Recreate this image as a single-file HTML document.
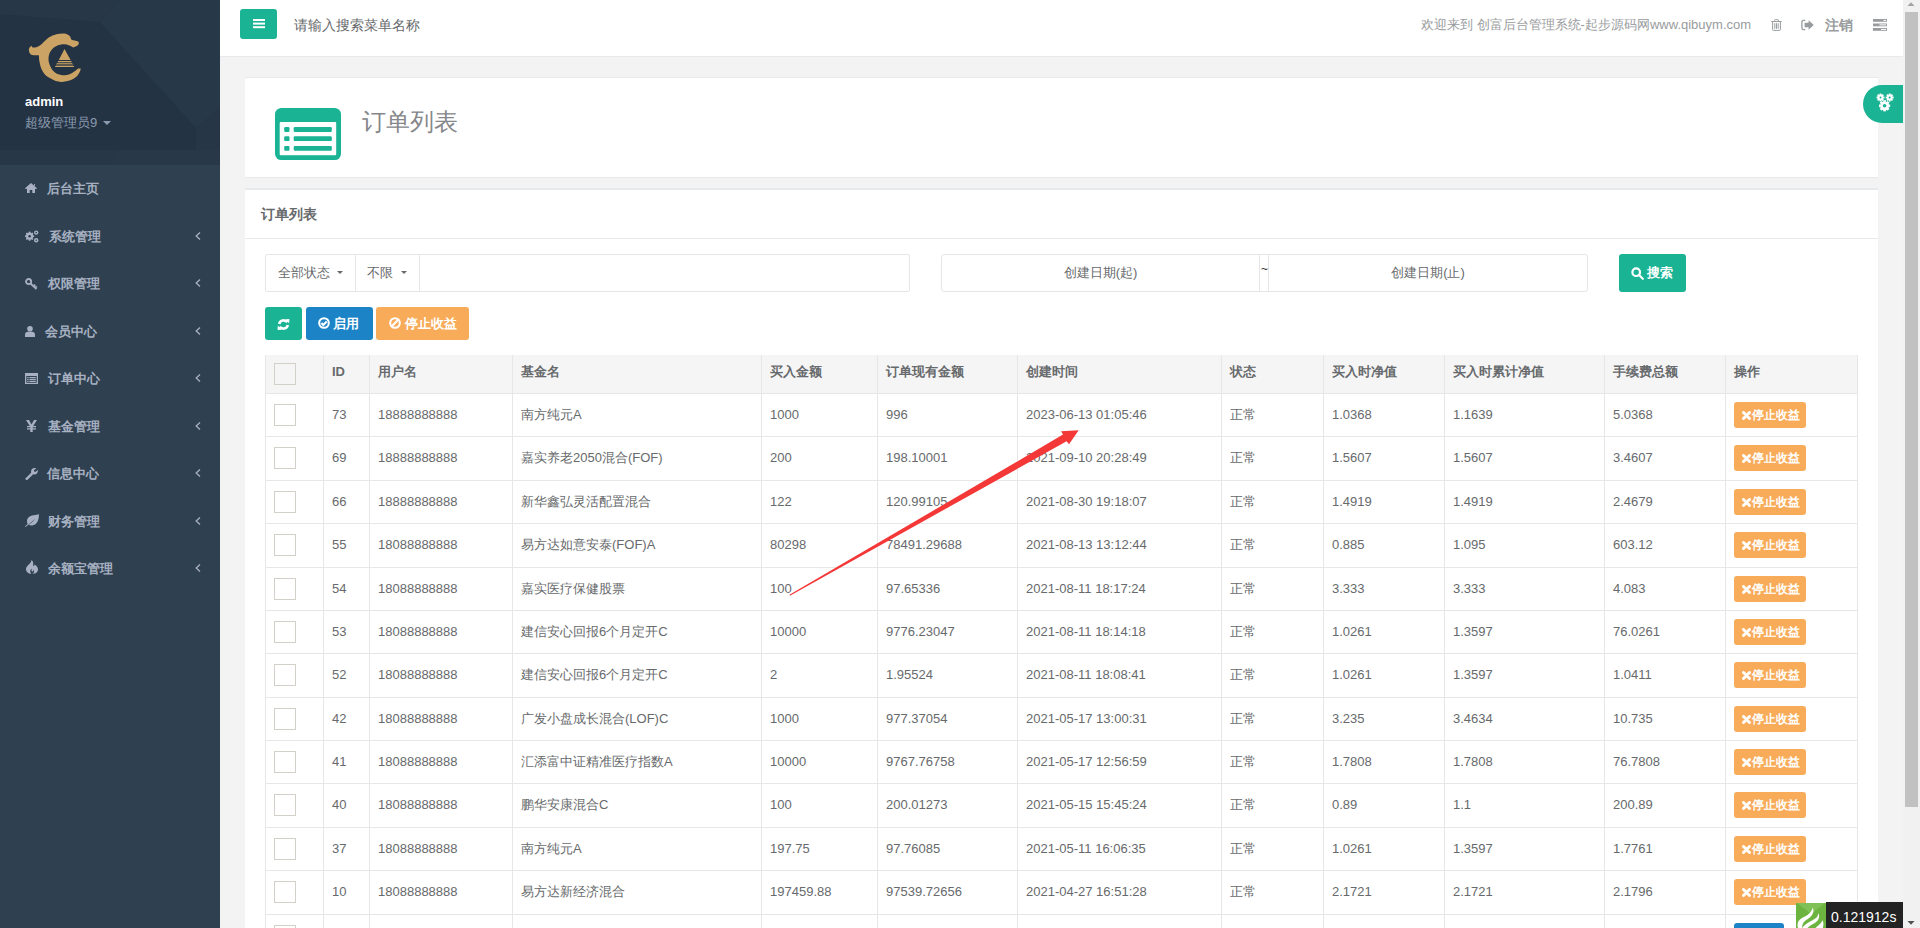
<!DOCTYPE html>
<html><head><meta charset="utf-8">
<style>
*{box-sizing:border-box;margin:0;padding:0}
html,body{width:1920px;height:928px;overflow:hidden}
body{font-family:"Liberation Sans",sans-serif;font-size:13px;color:#676a6c;background:#f3f3f4;position:relative}
.abs{position:absolute}
#side{left:0;top:0;width:220px;height:928px;background:#2f4050}
#hdr{left:0;top:0;width:220px;height:165px;background:#263545;overflow:hidden}
.nav a{position:absolute;left:0;width:220px;height:47.5px;color:#a7b1c2;font-weight:bold;font-size:13px}
.nav .ic{position:absolute;left:25px;top:0}
.nav .tx{position:absolute;left:47px;line-height:47.5px;top:0}
.nav .ar{position:absolute;left:194px;top:18px}
#top{left:220px;top:0;width:1683px;height:57px;background:#fff;border-bottom:1px solid #e7eaec}
#sb{left:1903px;top:0;width:17px;height:928px;background:#f1f1f1}
#box1{left:245px;top:77px;width:1633px;height:101px;background:#fff;border-top:1px solid #e7eaec;border-bottom:1px solid #e7eaec}
#box2{left:245px;top:188px;width:1633px;height:740px;background:#fff;border-top:2px solid #e7eaec}
.vl{top:355px;width:1px;height:573px;background:#e7e7e7}
.hl{left:265px;width:1593px;height:1px;background:#e7e7e7}
.th{font-weight:bold;font-size:13px;line-height:20px;white-space:nowrap;color:#676a6c}
.td{font-size:13px;line-height:20px;white-space:nowrap;color:#676a6c}
.cb{width:22px;height:22px;border:1px solid #d3d0ca;background:#fff}
.bo{width:72px;height:26px;background:#f8ac59;border-radius:3px;color:#fff;font-size:12px;font-weight:bold;line-height:26px;padding-left:17.5px;white-space:nowrap}
</style></head><body>
<div id="side" class="abs">
  <div id="hdr" class="abs">
    <svg class="abs" style="left:0;top:0" width="220" height="165">
      <rect width="220" height="165" fill="#243343"/>
      <polygon points="0,0 120,0 100,22 0,14" fill="#273748"/>
      <polygon points="100,22 120,0 220,0 220,108 196,128" fill="#273848"/>
      <polygon points="196,128 220,108 220,150 196,150" fill="#263646"/>
      <polygon points="0,150 120,150 110,165 0,165" fill="#273747"/><polygon points="120,150 220,150 220,165 110,165" fill="#283848"/>
    </svg>
    <svg class="abs" style="left:25px;top:30px" width="60" height="56" viewBox="0 0 60 56">
      <path fill="#cba465" d="M6.6,15.7 C4.5,17 3.6,19 3.9,20.5 C4.2,23 5.5,24.5 7,24.9 C9.5,25.5 12,25.2 13.9,25.3 C14,29 14.3,31.4 14.5,31.4 C15,35 16,38.5 17.5,41 C19.5,44.5 22,46.8 25.3,48.3 C29,50.5 32.5,51.9 36.2,51.9 C39.5,51.9 43,51.2 45.9,50.1 C49,48.8 51.3,47 53.1,44.7 C54.5,43 55.4,40.8 55.8,38.6 L53.1,38.6 C51.5,40 50,41.3 48.3,42.2 C45.5,44 42.5,45.3 39.8,45.3 C36.5,45.3 33.8,44.7 31.4,43.5 C28.5,41.5 26.3,39 25.3,36.2 C24,33.5 23.5,31.3 23.5,29 C23.5,26 24.2,23.8 25.3,21.7 C27,18.8 29.3,16.8 32,15.7 C34.2,14.7 36.7,14.2 39.2,14.2 C42.5,14.2 45.5,15.5 48.3,17.5 C50.5,16.5 53.5,15.5 53.7,13.9 C54,12.5 53.6,11.8 53.1,11.5 C51,10.6 48.5,10.3 46.5,9.7 C45.8,8.5 45.5,7 44.7,6 C43,4.5 41,3.7 39.2,3.6 C36.5,3.5 33.8,3.7 31.4,4.2 C28.5,5 26.2,6 24.1,7.2 C21.5,9 19.5,11.2 17.5,13.3 C15.8,15 14,16.2 12.1,16.9 C10.5,17.5 9,17.6 7.8,17.5 C7,17 6.8,16.4 6.6,15.7 Z"/>
      <path fill="#cba465" d="M39.5,19 L45.6,29.9 L33.8,29.9 Z"/>
      <rect x="32.9" y="31" width="13.6" height="1.2" fill="#cba465"/>
      <rect x="31.7" y="32.9" width="15.7" height="1.2" fill="#a58a5c"/>
      <rect x="31" y="34.5" width="17.2" height="0.9" fill="#8d7856"/>
      <rect x="30.2" y="35.9" width="18.7" height="1.1" fill="#cba465"/>
    </svg>
    <div class="abs" style="left:25px;top:94px;color:#fff;font-weight:bold;font-size:13px;line-height:16px">admin</div>
    <div class="abs" style="left:25px;top:114px;color:#8b9bb0;font-size:13px;line-height:18px">超级管理员9</div>
    <svg class="abs" style="left:103px;top:121px" width="8" height="5"><path d="M0,0 L8,0 L4,4 Z" fill="#8b9bb0"/></svg>
  </div>
  <div class="nav">
<svg class="abs" style="left:25px;top:183px" width="12" height="10" viewBox="0 0 12 10"><path fill="#a7b1c2" d="M6,0 L12,5.2 L11,6.2 L10,5.4 L10,10 L7.3,10 L7.3,7 L4.7,7 L4.7,10 L2,10 L2,5.4 L1,6.2 L0,5.2 Z M9,1 L10,1 L10,3 L9,2.2 Z"/></svg>
<div class="abs" style="left:47.3px;top:179.1px;color:#a7b1c2;font-weight:bold;font-size:13px;line-height:20px;white-space:nowrap">后台主页</div>
<svg class="abs" style="left:25px;top:230px" width="14" height="13" viewBox="0 0 14 13"><g fill="#a7b1c2"><circle cx="4.6" cy="6.2" r="3.6"/><rect x="3.8" y="1.6" width="1.6" height="9.2"/><rect x="0" y="5.4" width="9.2" height="1.6"/><rect x="3.8" y="1.6" width="1.6" height="9.2" transform="rotate(45 4.6 6.2)"/><rect x="3.8" y="1.6" width="1.6" height="9.2" transform="rotate(-45 4.6 6.2)"/><circle cx="11.2" cy="2.6" r="2.2"/><circle cx="11.2" cy="10.2" r="2.2"/></g><circle cx="4.6" cy="6.2" r="1.3" fill="#2f4050"/><circle cx="11.2" cy="2.6" r="0.8" fill="#2f4050"/><circle cx="11.2" cy="10.2" r="0.8" fill="#2f4050"/></svg>
<div class="abs" style="left:49.4px;top:226.6px;color:#a7b1c2;font-weight:bold;font-size:13px;line-height:20px;white-space:nowrap">系统管理</div>
<svg class="abs" style="left:195px;top:231.6px" width="6" height="8" viewBox="0 0 6 8"><path d="M5,0.5 L1.2,4 L5,7.5" fill="none" stroke="#a7b1c2" stroke-width="1.3"/></svg>
<svg class="abs" style="left:25px;top:278px" width="13" height="12" viewBox="0 0 13 12"><g fill="none" stroke="#a7b1c2" stroke-width="1.8"><circle cx="3.6" cy="3.6" r="2.6"/><path d="M5.5,5.5 L11.5,11 M8.5,8.2 L10.2,6.6 M10.2,9.8 L11.8,8.3"/></g></svg>
<div class="abs" style="left:48.1px;top:274.1px;color:#a7b1c2;font-weight:bold;font-size:13px;line-height:20px;white-space:nowrap">权限管理</div>
<svg class="abs" style="left:195px;top:279.1px" width="6" height="8" viewBox="0 0 6 8"><path d="M5,0.5 L1.2,4 L5,7.5" fill="none" stroke="#a7b1c2" stroke-width="1.3"/></svg>
<svg class="abs" style="left:25px;top:326px" width="10" height="11" viewBox="0 0 10 11"><g fill="#a7b1c2"><circle cx="5" cy="2.8" r="2.8"/><path d="M0,11 L0,8.5 C0,6.6 1.5,5.8 3,5.8 L7,5.8 C8.5,5.8 10,6.6 10,8.5 L10,11 Z"/></g></svg>
<div class="abs" style="left:44.6px;top:321.6px;color:#a7b1c2;font-weight:bold;font-size:13px;line-height:20px;white-space:nowrap">会员中心</div>
<svg class="abs" style="left:195px;top:326.6px" width="6" height="8" viewBox="0 0 6 8"><path d="M5,0.5 L1.2,4 L5,7.5" fill="none" stroke="#a7b1c2" stroke-width="1.3"/></svg>
<svg class="abs" style="left:25px;top:373px" width="13" height="11" viewBox="0 0 13 11"><g fill="#a7b1c2"><path d="M0,0 H13 V11 H0 Z M1.3,3 V9.8 H11.7 V3 Z"/><rect x="2.2" y="4" width="1.4" height="1.2"/><rect x="4.4" y="4" width="6.4" height="1.2"/><rect x="2.2" y="5.9" width="1.4" height="1.2"/><rect x="4.4" y="5.9" width="6.4" height="1.2"/><rect x="2.2" y="7.8" width="1.4" height="1.2"/><rect x="4.4" y="7.8" width="6.4" height="1.2"/></g></svg>
<div class="abs" style="left:48.1px;top:369.1px;color:#a7b1c2;font-weight:bold;font-size:13px;line-height:20px;white-space:nowrap">订单中心</div>
<svg class="abs" style="left:195px;top:374.1px" width="6" height="8" viewBox="0 0 6 8"><path d="M5,0.5 L1.2,4 L5,7.5" fill="none" stroke="#a7b1c2" stroke-width="1.3"/></svg>
<svg class="abs" style="left:26px;top:420px" width="11" height="12" viewBox="0 0 11 12"><g fill="#a7b1c2"><path d="M0,0 H3 L5.5,4.5 L8,0 H11 L7.2,6 H10 V7.3 H6.7 V8.2 H10 V9.5 H6.7 V12 H4.3 V9.5 H1 V8.2 H4.3 V7.3 H1 V6 H3.8 Z"/></g></svg>
<div class="abs" style="left:48.1px;top:416.6px;color:#a7b1c2;font-weight:bold;font-size:13px;line-height:20px;white-space:nowrap">基金管理</div>
<svg class="abs" style="left:195px;top:421.6px" width="6" height="8" viewBox="0 0 6 8"><path d="M5,0.5 L1.2,4 L5,7.5" fill="none" stroke="#a7b1c2" stroke-width="1.3"/></svg>
<svg class="abs" style="left:25px;top:468px" width="13" height="12" viewBox="0 0 13 12"><g fill="#a7b1c2"><path d="M0.6,10.2 L6.2,4.8 C5.7,3 6.4,1 8.3,0.3 C9.3,-0.1 10.4,0 11.2,0.4 L8.8,2.3 L9.3,3.6 L10.6,4 L12.6,1.8 C13.1,3.2 12.6,5 11.2,5.9 C10.2,6.5 9.2,6.6 8.2,6.3 L2.6,11.8 C2,12.2 1.2,12.1 0.7,11.6 C0.2,11.2 0.1,10.6 0.6,10.2 Z"/></g></svg>
<div class="abs" style="left:47.3px;top:464.1px;color:#a7b1c2;font-weight:bold;font-size:13px;line-height:20px;white-space:nowrap">信息中心</div>
<svg class="abs" style="left:195px;top:469.1px" width="6" height="8" viewBox="0 0 6 8"><path d="M5,0.5 L1.2,4 L5,7.5" fill="none" stroke="#a7b1c2" stroke-width="1.3"/></svg>
<svg class="abs" style="left:25px;top:514px" width="14" height="13" viewBox="0 0 14 13"><g fill="#a7b1c2"><path d="M13.8,0 C12.5,1 11,0.9 8.5,1.2 C4.5,1.6 2,4 2,7.3 C2,8.4 2.3,9.3 2.7,10 C1.6,10.9 0.8,11.8 0,12.5 L0.6,13 C1.6,12 3,10.8 4.8,9.4 C6.8,7.8 8.5,6.3 10.6,4.4 C8.8,6.6 6.6,8.6 3.8,10.7 C4.8,11.4 6,11.6 7.3,11.4 C11.4,10.8 13.3,7.4 13.8,3 C13.9,1.8 14,0.8 13.8,0 Z"/></g></svg>
<div class="abs" style="left:48.3px;top:511.6px;color:#a7b1c2;font-weight:bold;font-size:13px;line-height:20px;white-space:nowrap">财务管理</div>
<svg class="abs" style="left:195px;top:516.6px" width="6" height="8" viewBox="0 0 6 8"><path d="M5,0.5 L1.2,4 L5,7.5" fill="none" stroke="#a7b1c2" stroke-width="1.3"/></svg>
<svg class="abs" style="left:26px;top:560px" width="12" height="14" viewBox="0 0 12 14"><g fill="#a7b1c2"><path d="M5.4,0 C8,1.5 7,4.5 7.2,5.5 C7.4,6.4 8.5,6.3 8.4,4.6 C10.8,5.7 12,7.8 12,9.6 C12,12.2 9.6,14 6.4,14 C8.3,12.8 8.6,10.8 7.3,9.4 C7.7,10.8 7,11.6 6.2,11.4 C5.2,11.2 5.4,9.8 5.9,8.6 C4.2,9.6 3.6,11.4 5.2,14 C2.4,13.6 0,11.9 0,9.2 C0,5.4 5.6,3.8 5.4,0 Z"/></g></svg>
<div class="abs" style="left:48.3px;top:559.1px;color:#a7b1c2;font-weight:bold;font-size:13px;line-height:20px;white-space:nowrap">余额宝管理</div>
<svg class="abs" style="left:195px;top:564.1px" width="6" height="8" viewBox="0 0 6 8"><path d="M5,0.5 L1.2,4 L5,7.5" fill="none" stroke="#a7b1c2" stroke-width="1.3"/></svg>
</div>
</div>
<div id="top" class="abs">
  <div class="abs" style="left:20px;top:9px;width:37px;height:30px;background:#1ab394;border-radius:3px"></div>
  <svg class="abs" style="left:33px;top:19px" width="12" height="10" viewBox="0 0 12 10"><g fill="#fff"><rect x="0" y="0" width="12" height="2"/><rect x="0" y="3.6" width="12" height="2"/><rect x="0" y="7.2" width="12" height="2"/></g></svg>
  <div class="abs" style="left:74px;top:15px;font-size:14px;line-height:20px;color:#676a6c;white-space:nowrap">请输入搜索菜单名称</div>
  <div class="abs" style="left:1201px;top:15px;font-size:13px;line-height:20px;color:#999c9e;white-space:nowrap">欢迎来到 创富后台管理系统-起步源码网www.qibuym.com</div>
  <svg class="abs" style="left:1551px;top:19px" width="11" height="12" viewBox="0 0 11 12"><g fill="none" stroke="#999c9e" stroke-width="1"><path d="M0.3,2.5 H10.7 M3.6,2.5 V1.3 Q3.6,0.6 4.3,0.6 H6.7 Q7.4,0.6 7.4,1.3 V2.5 M1.6,2.5 V10.6 Q1.6,11.4 2.4,11.4 H8.6 Q9.4,11.4 9.4,10.6 V2.5 M3.8,4.2 V9.8 M5.5,4.2 V9.8 M7.2,4.2 V9.8"/></g></svg>
  <svg class="abs" style="left:1581px;top:19px" width="13" height="12" viewBox="0 0 13 12"><path d="M4.2,1.4 H2.6 Q0.9,1.4 0.9,3.1 V8.9 Q0.9,10.6 2.6,10.6 H4.2" fill="none" stroke="#999c9e" stroke-width="1.3"/><path d="M7.6,1.2 L12.8,6 L7.6,10.8 V8.2 H3.6 V3.8 H7.6 Z" fill="#999c9e"/></svg>
  <div class="abs" style="left:1605px;top:15px;font-size:14px;line-height:20px;color:#999c9e;font-weight:bold;white-space:nowrap">注销</div>
  <svg class="abs" style="left:1653px;top:19px" width="14" height="12" viewBox="0 0 14 12"><g fill="#999c9e"><rect x="0" y="0" width="14" height="2.8"/><rect x="0" y="4.5" width="14" height="2.8"/><rect x="0" y="9" width="14" height="2.8"/></g><g fill="#fff"><rect x="10.5" y="0.9" width="2.6" height="1"/><rect x="6.5" y="5.4" width="6.6" height="1"/><rect x="8" y="9.9" width="5.1" height="1"/></g></svg>
</div>
<div id="box1" class="abs">
  <svg class="abs" style="left:30px;top:30px" width="66" height="52" viewBox="0 0 66 52"><rect x="0" y="0" width="66" height="52" rx="6.3" fill="#1ab394"/><rect x="4.7" y="14" width="56.5" height="33.2" rx="1" fill="#fff"/><g fill="#1ab394"><rect x="9.2" y="19" width="5.3" height="5" rx="1.2"/><rect x="18.7" y="19" width="38.1" height="5" rx="1.2"/><rect x="9.2" y="28.3" width="5.3" height="4.8" rx="1.2"/><rect x="18.7" y="28.3" width="38.1" height="4.8" rx="1.2"/><rect x="9.2" y="37.9" width="5.3" height="4.8" rx="1.2"/><rect x="18.7" y="37.9" width="38.1" height="4.8" rx="1.2"/></g></svg>
  <div class="abs" style="left:117px;top:27px;font-size:24px;line-height:34px;color:#85878a;font-weight:300;white-space:nowrap">订单列表</div>
</div>
<div id="box2" class="abs">
  <div class="abs" style="left:16px;top:14px;font-size:14px;line-height:20px;font-weight:bold;color:#676a6c">订单列表</div>
  <div class="abs" style="left:0;top:48px;width:1633px;height:1px;background:#e7eaec"></div>
  <div class="abs" style="left:20px;top:64px;width:645px;height:37.5px;border:1px solid #e5e6e7;border-radius:2px"></div>
  <div class="abs" style="left:110px;top:64px;width:1px;height:37.5px;background:#e5e6e7"></div>
  <div class="abs" style="left:174px;top:64px;width:1px;height:37.5px;background:#e5e6e7"></div>
  <div class="abs" style="left:33px;top:73px;font-size:13px;line-height:20px;color:#676a6c;white-space:nowrap">全部状态</div>
  <svg class="abs" style="left:92px;top:81px" width="6" height="4"><path d="M0,0 H6 L3,3 Z" fill="#676a6c"/></svg>
  <div class="abs" style="left:122px;top:73px;font-size:13px;line-height:20px;color:#676a6c;white-space:nowrap">不限</div>
  <svg class="abs" style="left:156px;top:81px" width="6" height="4"><path d="M0,0 H6 L3,3 Z" fill="#676a6c"/></svg>
  <div class="abs" style="left:696px;top:64px;width:647px;height:37.5px;border:1px solid #e5e6e7;border-radius:3px"></div>
  <div class="abs" style="left:1014px;top:64px;width:1px;height:37.5px;background:#e5e6e7"></div>
  <div class="abs" style="left:1023px;top:64px;width:1px;height:37.5px;background:#e5e6e7"></div>
  <div class="abs" style="left:696px;top:73px;width:319px;text-align:center;font-size:13px;line-height:20px;color:#676a6c">创建日期(起)</div>
  <div class="abs" style="left:1023px;top:73px;width:320px;text-align:center;font-size:13px;line-height:20px;color:#676a6c">创建日期(止)</div>
  <div class="abs" style="left:1016px;top:73px;font-size:12px;line-height:12px;color:#333">~</div>
  <div class="abs" style="left:1374px;top:64px;width:67px;height:37.5px;background:#1ab394;border-radius:3px"></div>
  <svg class="abs" style="left:1386px;top:76.5px" width="13" height="13" viewBox="0 0 13 13"><g fill="none" stroke="#fff" stroke-width="2.2"><circle cx="5.2" cy="5.2" r="3.8"/><path d="M8,8 L11.8,11.8" stroke-linecap="round"/></g></svg>
  <div class="abs" style="left:1402px;top:73px;font-size:13px;line-height:20px;color:#fff;font-weight:bold;white-space:nowrap">搜索</div>
  <div class="abs" style="left:20px;top:117px;width:37px;height:33px;background:#1ab394;border-radius:3px"></div>
  <svg class="abs" style="left:32px;top:128.5px" width="13" height="11" viewBox="0 0 13 11"><g fill="none" stroke="#fff" stroke-width="2.6"><path d="M2.2,5 A4.4,4.4 0 0 1 10.2,3.4"/><path d="M10.8,6 A4.4,4.4 0 0 1 2.8,7.6"/></g><g fill="#fff"><path d="M8.2,0.2 L12.4,0 L12.2,4.4 Z"/><path d="M4.8,10.8 L0.6,11 L0.8,6.6 Z"/></g></svg>
  <div class="abs" style="left:61px;top:117px;width:67px;height:33px;background:#1c84c6;border-radius:3px"></div>
  <svg class="abs" style="left:73px;top:127px" width="12" height="12" viewBox="0 0 12 12"><circle cx="6" cy="6" r="4.8" fill="none" stroke="#fff" stroke-width="2.1"/><path d="M3.4,6 L5.3,7.9 L8.7,4.4" fill="none" stroke="#fff" stroke-width="2.1"/></svg>
  <div class="abs" style="left:88px;top:124px;font-size:13px;line-height:20px;color:#fff;font-weight:bold;white-space:nowrap">启用</div>
  <div class="abs" style="left:131px;top:117px;width:93px;height:33px;background:#f8ac59;border-radius:3px"></div>
  <svg class="abs" style="left:143.5px;top:127px" width="12" height="12" viewBox="0 0 12 12"><circle cx="6" cy="6" r="4.8" fill="none" stroke="#fff" stroke-width="2.1"/><path d="M2.8,9.2 L9.2,2.8" fill="none" stroke="#fff" stroke-width="2.1"/></svg>
  <div class="abs" style="left:160px;top:124px;font-size:13px;line-height:20px;color:#fff;font-weight:bold;white-space:nowrap">停止收益</div>
</div>
<div id="tbl">
<div class="abs" style="left:265px;top:355px;width:1593px;height:38px;background:#f5f5f6"></div>
<div class="abs vl" style="left:265px"></div>
<div class="abs vl" style="left:323px"></div>
<div class="abs vl" style="left:369px"></div>
<div class="abs vl" style="left:512px"></div>
<div class="abs vl" style="left:761px"></div>
<div class="abs vl" style="left:877px"></div>
<div class="abs vl" style="left:1017px"></div>
<div class="abs vl" style="left:1221px"></div>
<div class="abs vl" style="left:1323px"></div>
<div class="abs vl" style="left:1444px"></div>
<div class="abs vl" style="left:1604px"></div>
<div class="abs vl" style="left:1725px"></div>
<div class="abs vl" style="left:1857px"></div>
<div class="abs hl" style="top:393px"></div>
<div class="abs hl" style="top:436px"></div>
<div class="abs hl" style="top:480px"></div>
<div class="abs hl" style="top:523px"></div>
<div class="abs hl" style="top:567px"></div>
<div class="abs hl" style="top:610px"></div>
<div class="abs hl" style="top:653px"></div>
<div class="abs hl" style="top:697px"></div>
<div class="abs hl" style="top:740px"></div>
<div class="abs hl" style="top:783px"></div>
<div class="abs hl" style="top:827px"></div>
<div class="abs hl" style="top:870px"></div>
<div class="abs hl" style="top:914px"></div>
<div class="abs cb" style="left:274px;top:363px;background:#f5f5f6"></div>
<div class="abs th" style="left:332px;top:361.5px">ID</div>
<div class="abs th" style="left:378px;top:361.5px">用户名</div>
<div class="abs th" style="left:521px;top:361.5px">基金名</div>
<div class="abs th" style="left:770px;top:361.5px">买入金额</div>
<div class="abs th" style="left:886px;top:361.5px">订单现有金额</div>
<div class="abs th" style="left:1026px;top:361.5px">创建时间</div>
<div class="abs th" style="left:1230px;top:361.5px">状态</div>
<div class="abs th" style="left:1332px;top:361.5px">买入时净值</div>
<div class="abs th" style="left:1453px;top:361.5px">买入时累计净值</div>
<div class="abs th" style="left:1613px;top:361.5px">手续费总额</div>
<div class="abs th" style="left:1734px;top:361.5px">操作</div>
<div class="abs cb" style="left:274px;top:404.0px"></div>
<div class="abs td" style="left:332px;top:405.1px">73</div>
<div class="abs td" style="left:378px;top:405.1px">18888888888</div>
<div class="abs td" style="left:521px;top:405.1px">南方纯元A</div>
<div class="abs td" style="left:770px;top:405.1px">1000</div>
<div class="abs td" style="left:886px;top:405.1px">996</div>
<div class="abs td" style="left:1026px;top:405.1px">2023-06-13 01:05:46</div>
<div class="abs td" style="left:1230px;top:405.1px">正常</div>
<div class="abs td" style="left:1332px;top:405.1px">1.0368</div>
<div class="abs td" style="left:1453px;top:405.1px">1.1639</div>
<div class="abs td" style="left:1613px;top:405.1px">5.0368</div>
<div class="abs bo" style="left:1734px;top:402.0px"><svg width="9" height="9" viewBox="0 0 9 9" style="position:absolute;left:7.5px;top:9px"><path d="M1.5,1.5 L7.5,7.5 M7.5,1.5 L1.5,7.5" stroke="#fff" stroke-width="2.9" stroke-linecap="round"/></svg>停止收益</div>
<div class="abs cb" style="left:274px;top:447.0px"></div>
<div class="abs td" style="left:332px;top:448.1px">69</div>
<div class="abs td" style="left:378px;top:448.1px">18888888888</div>
<div class="abs td" style="left:521px;top:448.1px">嘉实养老2050混合(FOF)</div>
<div class="abs td" style="left:770px;top:448.1px">200</div>
<div class="abs td" style="left:886px;top:448.1px">198.10001</div>
<div class="abs td" style="left:1026px;top:448.1px">2021-09-10 20:28:49</div>
<div class="abs td" style="left:1230px;top:448.1px">正常</div>
<div class="abs td" style="left:1332px;top:448.1px">1.5607</div>
<div class="abs td" style="left:1453px;top:448.1px">1.5607</div>
<div class="abs td" style="left:1613px;top:448.1px">3.4607</div>
<div class="abs bo" style="left:1734px;top:445.0px"><svg width="9" height="9" viewBox="0 0 9 9" style="position:absolute;left:7.5px;top:9px"><path d="M1.5,1.5 L7.5,7.5 M7.5,1.5 L1.5,7.5" stroke="#fff" stroke-width="2.9" stroke-linecap="round"/></svg>停止收益</div>
<div class="abs cb" style="left:274px;top:491.0px"></div>
<div class="abs td" style="left:332px;top:492.1px">66</div>
<div class="abs td" style="left:378px;top:492.1px">18888888888</div>
<div class="abs td" style="left:521px;top:492.1px">新华鑫弘灵活配置混合</div>
<div class="abs td" style="left:770px;top:492.1px">122</div>
<div class="abs td" style="left:886px;top:492.1px">120.99105</div>
<div class="abs td" style="left:1026px;top:492.1px">2021-08-30 19:18:07</div>
<div class="abs td" style="left:1230px;top:492.1px">正常</div>
<div class="abs td" style="left:1332px;top:492.1px">1.4919</div>
<div class="abs td" style="left:1453px;top:492.1px">1.4919</div>
<div class="abs td" style="left:1613px;top:492.1px">2.4679</div>
<div class="abs bo" style="left:1734px;top:489.0px"><svg width="9" height="9" viewBox="0 0 9 9" style="position:absolute;left:7.5px;top:9px"><path d="M1.5,1.5 L7.5,7.5 M7.5,1.5 L1.5,7.5" stroke="#fff" stroke-width="2.9" stroke-linecap="round"/></svg>停止收益</div>
<div class="abs cb" style="left:274px;top:534.0px"></div>
<div class="abs td" style="left:332px;top:535.1px">55</div>
<div class="abs td" style="left:378px;top:535.1px">18088888888</div>
<div class="abs td" style="left:521px;top:535.1px">易方达如意安泰(FOF)A</div>
<div class="abs td" style="left:770px;top:535.1px">80298</div>
<div class="abs td" style="left:886px;top:535.1px">78491.29688</div>
<div class="abs td" style="left:1026px;top:535.1px">2021-08-13 13:12:44</div>
<div class="abs td" style="left:1230px;top:535.1px">正常</div>
<div class="abs td" style="left:1332px;top:535.1px">0.885</div>
<div class="abs td" style="left:1453px;top:535.1px">1.095</div>
<div class="abs td" style="left:1613px;top:535.1px">603.12</div>
<div class="abs bo" style="left:1734px;top:532.0px"><svg width="9" height="9" viewBox="0 0 9 9" style="position:absolute;left:7.5px;top:9px"><path d="M1.5,1.5 L7.5,7.5 M7.5,1.5 L1.5,7.5" stroke="#fff" stroke-width="2.9" stroke-linecap="round"/></svg>停止收益</div>
<div class="abs cb" style="left:274px;top:578.0px"></div>
<div class="abs td" style="left:332px;top:579.1px">54</div>
<div class="abs td" style="left:378px;top:579.1px">18088888888</div>
<div class="abs td" style="left:521px;top:579.1px">嘉实医疗保健股票</div>
<div class="abs td" style="left:770px;top:579.1px">100</div>
<div class="abs td" style="left:886px;top:579.1px">97.65336</div>
<div class="abs td" style="left:1026px;top:579.1px">2021-08-11 18:17:24</div>
<div class="abs td" style="left:1230px;top:579.1px">正常</div>
<div class="abs td" style="left:1332px;top:579.1px">3.333</div>
<div class="abs td" style="left:1453px;top:579.1px">3.333</div>
<div class="abs td" style="left:1613px;top:579.1px">4.083</div>
<div class="abs bo" style="left:1734px;top:576.0px"><svg width="9" height="9" viewBox="0 0 9 9" style="position:absolute;left:7.5px;top:9px"><path d="M1.5,1.5 L7.5,7.5 M7.5,1.5 L1.5,7.5" stroke="#fff" stroke-width="2.9" stroke-linecap="round"/></svg>停止收益</div>
<div class="abs cb" style="left:274px;top:621.0px"></div>
<div class="abs td" style="left:332px;top:622.1px">53</div>
<div class="abs td" style="left:378px;top:622.1px">18088888888</div>
<div class="abs td" style="left:521px;top:622.1px">建信安心回报6个月定开C</div>
<div class="abs td" style="left:770px;top:622.1px">10000</div>
<div class="abs td" style="left:886px;top:622.1px">9776.23047</div>
<div class="abs td" style="left:1026px;top:622.1px">2021-08-11 18:14:18</div>
<div class="abs td" style="left:1230px;top:622.1px">正常</div>
<div class="abs td" style="left:1332px;top:622.1px">1.0261</div>
<div class="abs td" style="left:1453px;top:622.1px">1.3597</div>
<div class="abs td" style="left:1613px;top:622.1px">76.0261</div>
<div class="abs bo" style="left:1734px;top:619.0px"><svg width="9" height="9" viewBox="0 0 9 9" style="position:absolute;left:7.5px;top:9px"><path d="M1.5,1.5 L7.5,7.5 M7.5,1.5 L1.5,7.5" stroke="#fff" stroke-width="2.9" stroke-linecap="round"/></svg>停止收益</div>
<div class="abs cb" style="left:274px;top:664.0px"></div>
<div class="abs td" style="left:332px;top:665.1px">52</div>
<div class="abs td" style="left:378px;top:665.1px">18088888888</div>
<div class="abs td" style="left:521px;top:665.1px">建信安心回报6个月定开C</div>
<div class="abs td" style="left:770px;top:665.1px">2</div>
<div class="abs td" style="left:886px;top:665.1px">1.95524</div>
<div class="abs td" style="left:1026px;top:665.1px">2021-08-11 18:08:41</div>
<div class="abs td" style="left:1230px;top:665.1px">正常</div>
<div class="abs td" style="left:1332px;top:665.1px">1.0261</div>
<div class="abs td" style="left:1453px;top:665.1px">1.3597</div>
<div class="abs td" style="left:1613px;top:665.1px">1.0411</div>
<div class="abs bo" style="left:1734px;top:662.0px"><svg width="9" height="9" viewBox="0 0 9 9" style="position:absolute;left:7.5px;top:9px"><path d="M1.5,1.5 L7.5,7.5 M7.5,1.5 L1.5,7.5" stroke="#fff" stroke-width="2.9" stroke-linecap="round"/></svg>停止收益</div>
<div class="abs cb" style="left:274px;top:708.0px"></div>
<div class="abs td" style="left:332px;top:709.1px">42</div>
<div class="abs td" style="left:378px;top:709.1px">18088888888</div>
<div class="abs td" style="left:521px;top:709.1px">广发小盘成长混合(LOF)C</div>
<div class="abs td" style="left:770px;top:709.1px">1000</div>
<div class="abs td" style="left:886px;top:709.1px">977.37054</div>
<div class="abs td" style="left:1026px;top:709.1px">2021-05-17 13:00:31</div>
<div class="abs td" style="left:1230px;top:709.1px">正常</div>
<div class="abs td" style="left:1332px;top:709.1px">3.235</div>
<div class="abs td" style="left:1453px;top:709.1px">3.4634</div>
<div class="abs td" style="left:1613px;top:709.1px">10.735</div>
<div class="abs bo" style="left:1734px;top:706.0px"><svg width="9" height="9" viewBox="0 0 9 9" style="position:absolute;left:7.5px;top:9px"><path d="M1.5,1.5 L7.5,7.5 M7.5,1.5 L1.5,7.5" stroke="#fff" stroke-width="2.9" stroke-linecap="round"/></svg>停止收益</div>
<div class="abs cb" style="left:274px;top:751.0px"></div>
<div class="abs td" style="left:332px;top:752.1px">41</div>
<div class="abs td" style="left:378px;top:752.1px">18088888888</div>
<div class="abs td" style="left:521px;top:752.1px">汇添富中证精准医疗指数A</div>
<div class="abs td" style="left:770px;top:752.1px">10000</div>
<div class="abs td" style="left:886px;top:752.1px">9767.76758</div>
<div class="abs td" style="left:1026px;top:752.1px">2021-05-17 12:56:59</div>
<div class="abs td" style="left:1230px;top:752.1px">正常</div>
<div class="abs td" style="left:1332px;top:752.1px">1.7808</div>
<div class="abs td" style="left:1453px;top:752.1px">1.7808</div>
<div class="abs td" style="left:1613px;top:752.1px">76.7808</div>
<div class="abs bo" style="left:1734px;top:749.0px"><svg width="9" height="9" viewBox="0 0 9 9" style="position:absolute;left:7.5px;top:9px"><path d="M1.5,1.5 L7.5,7.5 M7.5,1.5 L1.5,7.5" stroke="#fff" stroke-width="2.9" stroke-linecap="round"/></svg>停止收益</div>
<div class="abs cb" style="left:274px;top:794.0px"></div>
<div class="abs td" style="left:332px;top:795.1px">40</div>
<div class="abs td" style="left:378px;top:795.1px">18088888888</div>
<div class="abs td" style="left:521px;top:795.1px">鹏华安康混合C</div>
<div class="abs td" style="left:770px;top:795.1px">100</div>
<div class="abs td" style="left:886px;top:795.1px">200.01273</div>
<div class="abs td" style="left:1026px;top:795.1px">2021-05-15 15:45:24</div>
<div class="abs td" style="left:1230px;top:795.1px">正常</div>
<div class="abs td" style="left:1332px;top:795.1px">0.89</div>
<div class="abs td" style="left:1453px;top:795.1px">1.1</div>
<div class="abs td" style="left:1613px;top:795.1px">200.89</div>
<div class="abs bo" style="left:1734px;top:792.0px"><svg width="9" height="9" viewBox="0 0 9 9" style="position:absolute;left:7.5px;top:9px"><path d="M1.5,1.5 L7.5,7.5 M7.5,1.5 L1.5,7.5" stroke="#fff" stroke-width="2.9" stroke-linecap="round"/></svg>停止收益</div>
<div class="abs cb" style="left:274px;top:838.0px"></div>
<div class="abs td" style="left:332px;top:839.1px">37</div>
<div class="abs td" style="left:378px;top:839.1px">18088888888</div>
<div class="abs td" style="left:521px;top:839.1px">南方纯元A</div>
<div class="abs td" style="left:770px;top:839.1px">197.75</div>
<div class="abs td" style="left:886px;top:839.1px">97.76085</div>
<div class="abs td" style="left:1026px;top:839.1px">2021-05-11 16:06:35</div>
<div class="abs td" style="left:1230px;top:839.1px">正常</div>
<div class="abs td" style="left:1332px;top:839.1px">1.0261</div>
<div class="abs td" style="left:1453px;top:839.1px">1.3597</div>
<div class="abs td" style="left:1613px;top:839.1px">1.7761</div>
<div class="abs bo" style="left:1734px;top:836.0px"><svg width="9" height="9" viewBox="0 0 9 9" style="position:absolute;left:7.5px;top:9px"><path d="M1.5,1.5 L7.5,7.5 M7.5,1.5 L1.5,7.5" stroke="#fff" stroke-width="2.9" stroke-linecap="round"/></svg>停止收益</div>
<div class="abs cb" style="left:274px;top:881.0px"></div>
<div class="abs td" style="left:332px;top:882.1px">10</div>
<div class="abs td" style="left:378px;top:882.1px">18088888888</div>
<div class="abs td" style="left:521px;top:882.1px">易方达新经济混合</div>
<div class="abs td" style="left:770px;top:882.1px">197459.88</div>
<div class="abs td" style="left:886px;top:882.1px">97539.72656</div>
<div class="abs td" style="left:1026px;top:882.1px">2021-04-27 16:51:28</div>
<div class="abs td" style="left:1230px;top:882.1px">正常</div>
<div class="abs td" style="left:1332px;top:882.1px">2.1721</div>
<div class="abs td" style="left:1453px;top:882.1px">2.1721</div>
<div class="abs td" style="left:1613px;top:882.1px">2.1796</div>
<div class="abs bo" style="left:1734px;top:879.0px"><svg width="9" height="9" viewBox="0 0 9 9" style="position:absolute;left:7.5px;top:9px"><path d="M1.5,1.5 L7.5,7.5 M7.5,1.5 L1.5,7.5" stroke="#fff" stroke-width="2.9" stroke-linecap="round"/></svg>停止收益</div>
<div class="abs cb" style="left:274px;top:925.0px"></div>
<div class="abs" style="left:1734px;top:923px;width:50px;height:26px;background:#1c84c6;border-radius:3px"></div>
</div>
<div id="sb" class="abs">
  <div class="abs" style="left:2px;top:12px;width:13px;height:795px;background:#c1c1c1"></div>
  <svg class="abs" style="left:4px;top:1px" width="8" height="6"><path d="M0.5,5 L7.5,5 L4,1.2 Z" fill="#a3a3a3"/></svg>
  <svg class="abs" style="left:4px;top:920px" width="8" height="6"><path d="M0.5,1 L7.5,1 L4,4.8 Z" fill="#505050"/></svg>
</div>
<svg class="abs" style="left:0;top:0;pointer-events:none" width="1920" height="928"><polygon fill="#f43838" points="789.45,594.87 1063,434.6 1061.1,431.3 1078.7,430.2 1069,444.2 1066.6,441.3 789.95,595.73"/></svg>
<div class="abs" style="left:1863px;top:85px;width:40px;height:38px;background:#1ab394;border-radius:19px 0 0 19px"></div>
<svg class="abs" style="left:1873px;top:92px" width="22" height="24" viewBox="0 0 22 24">
 <g fill="#fff">
  <g transform="translate(7.5,5.5)"><circle r="2.9"/><rect x="-0.9" y="-4" width="1.8" height="8"/><rect x="-4" y="-0.9" width="8" height="1.8"/><rect x="-0.9" y="-4" width="1.8" height="8" transform="rotate(45)"/><rect x="-0.9" y="-4" width="1.8" height="8" transform="rotate(-45)"/></g>
  <g transform="translate(16.7,5.5)"><circle r="2.9"/><rect x="-0.9" y="-4" width="1.8" height="8"/><rect x="-4" y="-0.9" width="8" height="1.8"/><rect x="-0.9" y="-4" width="1.8" height="8" transform="rotate(45)"/><rect x="-0.9" y="-4" width="1.8" height="8" transform="rotate(-45)"/></g>
  <g transform="translate(11.6,13.8)"><circle r="4.4"/><rect x="-1.3" y="-5.6" width="2.6" height="11.2"/><rect x="-5.6" y="-1.3" width="11.2" height="2.6"/><rect x="-1.3" y="-5.6" width="2.6" height="11.2" transform="rotate(45)"/><rect x="-1.3" y="-5.6" width="2.6" height="11.2" transform="rotate(-45)"/></g>
 </g>
 <circle cx="7.5" cy="5.5" r="1" fill="#1ab394"/><circle cx="16.7" cy="5.5" r="1" fill="#1ab394"/><circle cx="11.6" cy="13.8" r="1.8" fill="#1ab394"/>
</svg>
<div class="abs" style="left:1796px;top:903px;width:30px;height:25px;background:#6db33f;overflow:hidden">
  <svg width="30" height="26" viewBox="0 1 30 26" style="position:absolute;left:0;top:0"><polygon points="1,1 29,1 15,12" fill="#80c157"/><g fill="#fff"><path d="M16.8,5.4 C18.5,10 17,14 11,17.5 C7,20 5.5,23 6.5,27 L2.2,27 C0.8,22 1.5,18.5 6,16 C11.5,13 15.5,11 16.8,5.4 Z"/><path d="M22.5,11.1 C24,15 23,19 17,22 C14,23.5 12,25 11,27 L5.5,27 C8,23 11,21 15,19 C19.5,17 22,15 22.5,11.1 Z"/><path d="M26.5,18.3 C28,21 27.5,24 26.5,27 L18.5,27 C21,24 25,22.5 26.5,18.3 Z"/></g></svg>
</div>
<div class="abs" style="left:1826px;top:902px;width:77px;height:26px;background:#232323;color:#fff;font-size:14px;line-height:30px;padding-left:5px;white-space:nowrap">0.121912s</div>
</body></html>
